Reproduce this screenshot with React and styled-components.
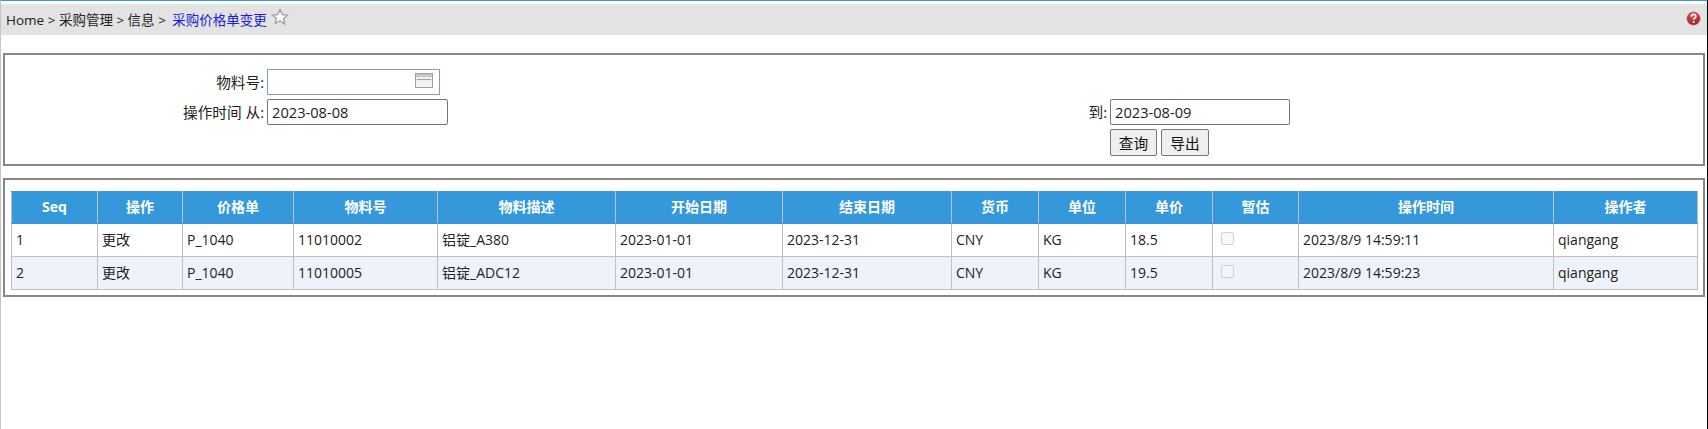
import React from "react";
import styled, { createGlobalStyle } from "styled-components";

const Global = createGlobalStyle`
  html, body { margin: 0; padding: 0; background: #fff; overflow: hidden; }
  body { font-family: "Open Sans", "Noto Sans CJK SC", sans-serif; font-size: 14px; color: #222; }
`;
const Page = styled.div`
  height: 429px;
  box-sizing: border-box;
  border-top: 1px solid #3498db;
  border-left: 1px solid #c4c4c4;
  border-right: 1px solid #000;
  padding-top: 3px;
`;
const Crumbs = styled.div`
  height: 31px;
  box-sizing: border-box;
  background: #e3e3e3;
  display: flex;
  align-items: center;
  padding: 0 5px 2px;
  font-size: 13.5px;
`;
const Trail = styled.span`
  white-space: pre;
  margin-left: ${(p) => (p.$current ? 3 : 0)}px;
  color: ${(p) => (p.$current ? "#1a1ae0" : "#222")};
`;
const StarIcon = styled.svg`
  margin-left: 4px;
  margin-bottom: 4px;
`;
const HelpIcon = styled.svg`
  margin-left: auto;
  margin-right: 1px;
`;
const Panel = styled.section`
  box-sizing: border-box;
  margin: ${(p) => p.$top}px 2px 0 2px;
  border: 2px solid #878787;
  background: #fff;
`;
const FormGrid = styled(Panel)`
  height: 113px;
  padding: 14px 0 0;
  display: grid;
  grid-template-columns: 262px 780px 63px 1fr;
  grid-auto-rows: 26px;
  row-gap: 4px;
  font-size: 14.67px;
`;
const Label = styled.label`
  text-align: right;
  padding-right: 3px;
  line-height: 26px;
  grid-column: ${(p) => p.$col};
`;
const Field = styled.div`
  box-sizing: border-box;
  width: ${(p) => p.$w}px;
  height: 26px;
  border: 1px solid ${(p) => (p.$plain ? "#8a9bb0" : "#767676")};
  border-radius: ${(p) => (p.$plain ? 0 : 2)}px;
  padding: 0 6px 0 4px;
  line-height: 24px;
  display: flex;
  align-items: center;
  justify-content: space-between;
`;
const CalendarIcon = styled.svg`
  margin-bottom: 3px;
`;
const Buttons = styled.div`
  grid-column: 4;
  display: flex;
  gap: 4px;
`;
const Btn = styled.button`
  box-sizing: border-box;
  height: 27px;
  width: ${(p) => p.$w || 47}px;
  padding: 0;
  border: 1px solid #767676;
  border-radius: 2px;
  background: #efefef;
  color: #111;
  font: inherit;
`;
const TablePanel = styled(Panel)`
  height: 119px;
  padding: 11px 6px 0;
`;
const Grid = styled.table`
  border-collapse: collapse;
  table-layout: fixed;
  width: 1686px;
`;
const Head = styled.th`
  height: 32px;
  padding: 0 0 3px;
  box-sizing: border-box;
  background: #3498db;
  color: #fff;
  font-weight: 700;
  border: 1px solid #c0c0c0;
  border-top-color: #3498db;
  border-bottom-color: #3498db;
  font-size: 14px;
`;
const Row = styled.tr`
  background: ${(p) => (p.$alt ? "#eef3fb" : "#fff")};
`;
const Cell = styled.td`
  height: 33px;
  box-sizing: border-box;
  padding: 0 4px 2px;
  border: 1px solid #c0c0c0;
  font-size: 14px;
  white-space: nowrap;
`;

const cols = [86, 85, 111, 144, 178, 167, 169, 87, 87, 87, 86, 255, 144];
const heads = ["Seq", "操作", "价格单", "物料号", "物料描述", "开始日期", "结束日期", "货币", "单位", "单价", "暂估", "操作时间", "操作者"];
const rows = [
  ["1", "更改", "P_1040", "11010002", "铝锭_A380", "2023-01-01", "2023-12-31", "CNY", "KG", "18.5", null, "2023/8/9 14:59:11", "qiangang"],
  ["2", "更改", "P_1040", "11010005", "铝锭_ADC12", "2023-01-01", "2023-12-31", "CNY", "KG", "19.5", null, "2023/8/9 14:59:23", "qiangang"],
];

export default function App() {
  return (
    <Page>
      <Global />
      <Crumbs>
        <Trail>Home &gt; 采购管理 &gt; 信息 &gt;</Trail>
        <Trail $current> 采购价格单变更</Trail>
        <StarIcon width="18" height="18" viewBox="0 0 24 24" fill="#fff" stroke="#a0a0a0" strokeWidth="1.8">
          <path d="M12 2.2l3 6.5 7 .9-5.2 4.8 1.4 7L12 17l-6.2 3.4 1.4-7L2 9.6l7-.9z" />
        </StarIcon>
        <HelpIcon width="15" height="15" viewBox="0 0 14 14">
          <defs>
            <radialGradient id="helpGloss" cx="45%" cy="30%" r="70%">
              <stop offset="0%" stopColor="#d9565a" />
              <stop offset="100%" stopColor="#a31f26" />
            </radialGradient>
          </defs>
          <circle cx="7" cy="7" r="6.4" fill="url(#helpGloss)" stroke="#d8b4b4" strokeWidth="0.6" />
          <path d="M4.9 5.2C5 3.9 5.9 3.2 7.1 3.2c1.3 0 2.1.8 2.1 1.8 0 1.6-2 1.6-2 3.2" fill="none" stroke="#fff" strokeWidth="1.5" />
          <circle cx="7.1" cy="10.3" r="0.9" fill="#fff" />
        </HelpIcon>
      </Crumbs>
      <FormGrid as="form" $top={18}>
        <Label $col={1}>物料号:</Label>
        <Field $w={173} $plain>
          <span />
          <CalendarIcon width="18" height="15" viewBox="0 0 18 15">
            <rect x="0.5" y="0.5" width="17" height="14" fill="#f2f2f2" stroke="#a0a0a0" />
            <rect x="1" y="1" width="16" height="3" fill="#c8c8c8" />
            <path d="M2 6.5h14" stroke="#a0a0a0" />
          </CalendarIcon>
        </Field>
        <span />
        <span />
        <Label $col={1}>操作时间 从:</Label>
        <Field $w={181}>2023-08-08</Field>
        <Label $col={3}>到:</Label>
        <Field $w={180}>2023-08-09</Field>
        <Buttons>
          <Btn type="button">查询</Btn>
          <Btn type="button" $w={48}>导出</Btn>
        </Buttons>
      </FormGrid>
      <TablePanel $top={12}>
        <Grid>
          <colgroup>
            {cols.map((w, i) => <col key={i} style={{ width: w }} />)}
          </colgroup>
          <thead>
            <tr>{heads.map((h) => <Head key={h}>{h}</Head>)}</tr>
          </thead>
          <tbody>
            {rows.map((r, i) => (
              <Row key={i} $alt={i === 1}>
                {r.map((c, j) => (
                  <Cell key={j}>{c === null ? <input type="checkbox" disabled /> : c}</Cell>
                ))}
              </Row>
            ))}
          </tbody>
        </Grid>
      </TablePanel>
    </Page>
  );
}
